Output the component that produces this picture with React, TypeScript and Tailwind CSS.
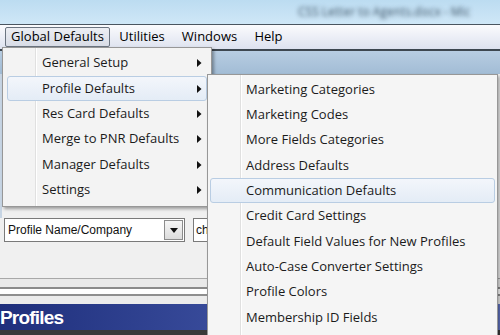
import React from "react";

type Item = { label: string; arrow?: boolean; active?: boolean };

const GLOBAL_MENU: Item[] = [
  { label: "General Setup", arrow: true },
  { label: "Profile Defaults", arrow: true, active: true },
  { label: "Res Card Defaults", arrow: true },
  { label: "Merge to PNR Defaults", arrow: true },
  { label: "Manager Defaults", arrow: true },
  { label: "Settings", arrow: true },
];

const PROFILE_MENU: Item[] = [
  { label: "Marketing Categories" },
  { label: "Marketing Codes" },
  { label: "More Fields Categories" },
  { label: "Address Defaults" },
  { label: "Communication Defaults", active: true },
  { label: "Credit Card Settings" },
  { label: "Default Field Values for New Profiles" },
  { label: "Auto-Case Converter Settings" },
  { label: "Profile Colors" },
  { label: "Membership ID Fields" },
];

function Arrow() {
  return (
    <svg width="5" height="8" viewBox="0 0 5 8" className="absolute right-[4px] top-1/2 -translate-y-1/2">
      <path d="M0 0 L4.5 4 L0 8 Z" fill="#111" />
    </svg>
  );
}

function MenuRow({ item, inset, pad }: { item: Item; inset: string; pad: string }) {
  return (
    <div
      className={`relative flex h-[25.35px] items-center rounded-[3px] border text-[#1b1b1b] ${inset} ${pad} ${
        item.active
          ? "border-[#b9cde3] bg-gradient-to-b from-[#f3f6fb] to-[#e4ecf6]"
          : "border-transparent"
      }`}
    >
      <span className="whitespace-nowrap">{item.label}</span>
      {item.arrow && <Arrow />}
    </div>
  );
}

export default function App() {
  const menuFont = "font-['Open_Sans',sans-serif] text-[13px]";
  return (
    <div className={`relative h-[335px] w-[500px] overflow-hidden bg-[#f0f0f0] ${menuFont}`}>
      {/* title bar, caption is blurred in the shot */}
      <div className="flex h-[24px] items-center bg-gradient-to-b from-[#bcdcf1] to-[#cfe7f7] pl-[298px]">
        <span className="whitespace-nowrap text-[12px] text-transparent [text-shadow:0_0_4px_#3f5566]">
          CSS Letter to Agents.docx - Mic
        </span>
      </div>
      <div className="h-px bg-[#4a5560]" />

      {/* menu bar */}
      <div className="flex h-[24px] items-center gap-[2px] bg-gradient-to-b from-[#fbfbfd] to-[#dde2ef] pl-[5px]">
        <div className="flex h-[20px] w-[105px] items-center justify-center rounded-[2px] border border-[#6b7480] bg-gradient-to-b from-[#eceef3] to-[#d8dce6]">
          Global Defaults
        </div>
        <div className="w-[60px] text-center">Utilities</div>
        <div className="w-[71px] text-center">Windows</div>
        <div className="w-[43px] text-center">Help</div>
      </div>
      <div className="h-[2px] bg-[#3d4750]" />

      {/* toolbar strip */}
      <div className="h-[23px] bg-gradient-to-b from-[#b7cde2] to-[#a2bcd5]" />

      {/* window body */}
      <div className="flex h-[261px] flex-col">
        <div className="h-[144px] border-l-2 border-[#c7d5e4] bg-[#f0f0f0]" />
        <div className="flex h-[24px] items-stretch gap-[8px] pl-[4px] font-['Liberation_Sans',sans-serif] text-[12px]">
          <div className="flex w-[181px] items-center border border-[#7a7a7a] bg-white pl-[3px]">
            <span className="flex-1 text-[#111]">Profile Name/Company</span>
            <div className="mr-[1px] flex h-[20px] w-[19px] items-center justify-center border border-[#8c8c8c] bg-gradient-to-b from-[#f6f6f6] to-[#dcdcdc]">
              <svg width="8" height="5" viewBox="0 0 8 5">
                <path d="M0 0 H8 L4 5 Z" fill="#111" />
              </svg>
            </div>
          </div>
          <div className="flex w-[40px] items-center border border-[#7a7a7a] bg-white pl-[2px] text-[#111]">
            ch
          </div>
        </div>
        <div className="h-[36px]" />
        <div className="h-px bg-[#a8a8a8]" />
        <div className="h-[8px] bg-[#e9e9e9]" />
        <div className="h-[2px] bg-[#8a8a8a]" />
        <div className="h-[5px] bg-white" />
        <div className="h-[2px] bg-[#8f8f8f]" />
        <div className="h-[8px] bg-[#ececec]" />
        <div className="flex h-[26px] items-center bg-gradient-to-r from-[#1f2f7c] via-[#3c4f9f] to-[#6073c0]">
          <span className="font-['Liberation_Sans',sans-serif] text-[19px] font-bold leading-none tracking-[-0.8px] text-white">
            Profiles
          </span>
        </div>
        <div className="flex-1 bg-[#3a3a3a]" />
      </div>

      {/* Global Defaults dropdown */}
      <div className="absolute left-[2px] top-[47px] h-[160px] w-[210px] border border-[#979797] bg-[#f3f3f3] pt-[2.5px] shadow-[2px_2px_3px_rgba(0,0,0,0.35)]">
        <div className="absolute bottom-0 left-[32px] top-0 w-[2px] border-l border-[#e0e0e0] bg-white" />
        {GLOBAL_MENU.map((item) => (
          <MenuRow key={item.label} item={item} inset="mx-[4px]" pad="pl-[34px]" />
        ))}
      </div>

      {/* Profile Defaults submenu */}
      <div className="absolute left-[207px] top-[74px] h-[280px] w-[291px] border border-[#979797] bg-[#f5f5f5] pt-[1.6px] shadow-[2px_2px_3px_rgba(0,0,0,0.3)]">
        <div className="absolute bottom-0 left-[32px] top-0 w-[2px] border-l border-[#e0e0e0] bg-white" />
        {PROFILE_MENU.map((item) => (
          <MenuRow key={item.label} item={item} inset="mx-[2px]" pad="pl-[35px]" />
        ))}
      </div>
    </div>
  );
}
